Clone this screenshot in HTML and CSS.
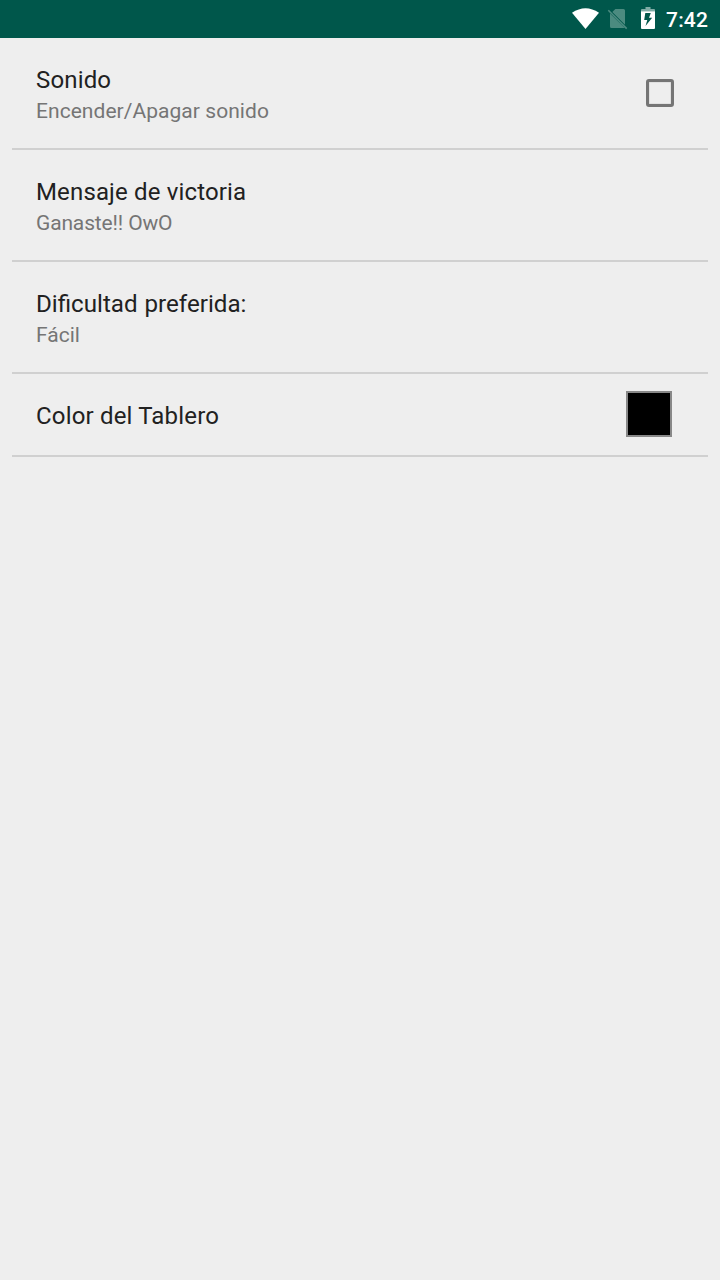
FILE: index.html
```html
<!DOCTYPE html>
<html lang="es">
<head>
<meta charset="utf-8">
<title>Ajustes</title>
<link rel="stylesheet" href="styles.css">
</head>
<body>
<header class="status-bar">
  <svg class="status-icons" width="90" height="38" viewBox="570 0 90 38">
    <path fill="#fff" d="M572 12.8Q585.5 3.6 599 12.8L585.5 29Z"/>
    <path fill="#4c8b80" d="M615.4 9H623.5Q625 9 625 10.5V24.8L612.3 12.1ZM610 13.5L624.8 28H611.5Q610 28 610 26.5Z"/>
    <path stroke="#4c8b80" stroke-width="1.6" d="M608.3 10.2L626.7 28.6"/>
    <path fill="#80aba5" d="M645.5 9V7H650.5V9H654Q655 9 655 10V11.3H641V10Q641 9 642 9Z"/>
    <path fill="#fff" fill-rule="evenodd" d="M641 11.3H655V28Q655 29 654 29H642Q641 29 641 28ZM645.3 13L644.2 20H647.3L645.5 26L652.2 17.8H649L650.8 13Z"/>
  </svg>
  <time class="clock">7:42</time>
</header>
<main class="preferences">
  <section class="preference">
    <div class="labels"><div class="title sound">Sonido</div><div class="summary sound-summary">Encender/Apagar sonido</div></div>
    <span class="checkbox" role="checkbox" aria-checked="false"></span>
  </section>
  <section class="preference">
    <div class="labels"><div class="title message">Mensaje de victoria</div><div class="summary message-summary">Ganaste!! OwO</div></div>
  </section>
  <section class="preference">
    <div class="labels"><div class="title difficulty">Dificultad preferida:</div><div class="summary">Fácil</div></div>
  </section>
  <section class="preference compact">
    <div class="labels"><div class="title color">Color del Tablero</div></div>
    <span class="swatch"></span>
  </section>
</main>
</body>
</html>
```

FILE: styles.css
```css
* { box-sizing: border-box; }
body { margin: 0; min-height: 1280px; background: #eee; font-family: Roboto, sans-serif; }
.status-bar { height: 38px; background: #00574b; display: flex; justify-content: flex-end; padding-right: 12px; }
.status-icons { display: block; margin-right: 6px; }
.clock { width: 42px; color: #fff; font-size: 21px; font-weight: 500; line-height: 40px; letter-spacing: 0.2px; white-space: nowrap; }
.preferences { padding: 0 12px; }
.preference { height: 112px; padding: 26px 34px 0 24px; border-bottom: 2px solid #d0d0d0; display: flex; justify-content: space-between; }
.title { font-size: 24px; line-height: 32px; color: #212121; font-variant-ligatures: common-ligatures; }
.summary { font-size: 21px; line-height: 30px; color: #757575; }
.sound { letter-spacing: 0.15px; }
.sound-summary { letter-spacing: 0.05px; }
.message { letter-spacing: 0.15px; }
.message-summary { letter-spacing: -0.15px; }
.difficulty { word-spacing: 1px; font-size: 24.15px; }
.color { letter-spacing: 0.17px; }
.checkbox { width: 28px; height: 28px; margin-top: 15px; border: 3px solid #757575; border-radius: 3px; box-shadow: inset 0 0 1px #757575; }
.compact { height: 83px; padding: 17px 36px 0 24px; }
.compact .title { line-height: 50px; }
.swatch { width: 46px; height: 46px; background: #000; border: 2px solid #888; }
```
